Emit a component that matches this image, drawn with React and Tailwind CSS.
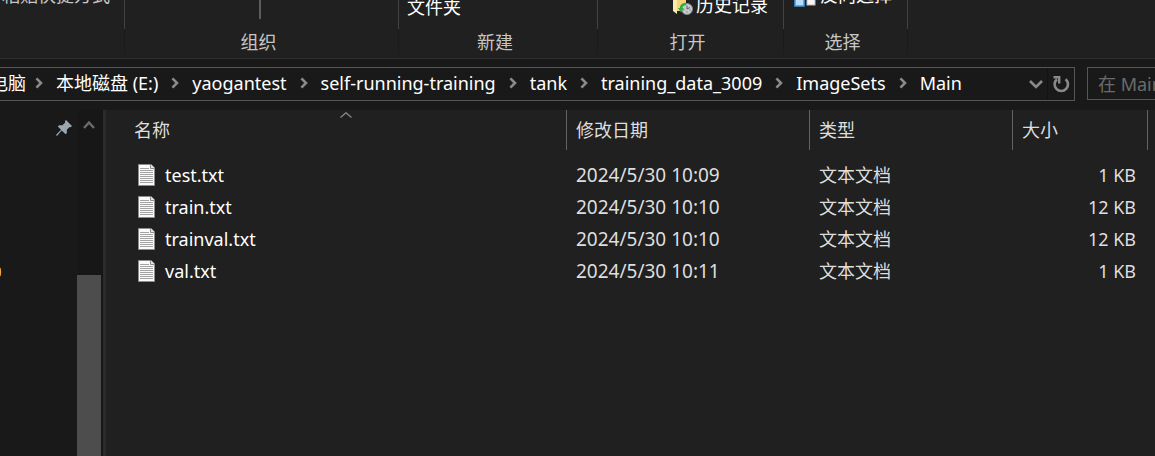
import React, { useState } from 'react';

const crumbs = [
  '本地磁盘 (E:)',
  'yaogantest',
  'self-running-training',
  'tank',
  'training_data_3009',
  'ImageSets',
  'Main',
];

const files = [
  { name: 'test.txt', date: '2024/5/30 10:09', type: '文本文档', size: '1 KB' },
  { name: 'train.txt', date: '2024/5/30 10:10', type: '文本文档', size: '12 KB' },
  { name: 'trainval.txt', date: '2024/5/30 10:10', type: '文本文档', size: '12 KB' },
  { name: 'val.txt', date: '2024/5/30 10:11', type: '文本文档', size: '1 KB' },
];

function ChevronRight() {
  return (
    <svg className="h-3 w-2 shrink-0" viewBox="0 0 8 12" fill="none" stroke="#8a8a8a" strokeWidth="2.6">
      <path d="M1.4 1.4 6 6 1.4 10.6" />
    </svg>
  );
}

function TextFileIcon() {
  return (
    <svg className="h-[22px] w-[17px] shrink-0" viewBox="0 0 17 22">
      <path d="M.5.5H13L16.5 4v17.5H.5z" fill="#fafafa" stroke="#8c8c8c" />
      <path d="M12.5 0v4.5H17" fill="#e8e8e8" stroke="#8c8c8c" />
      <path d="M2 4.5h9M2 6.5h13M2 8.5h13M2 10.5h13M2 12.5h13M2 14.5h13M2 16.5h13M2 18.5h13" stroke="#a3a3a3" />
    </svg>
  );
}

function HistoryIcon() {
  return (
    <svg className="h-6 w-6 shrink-0" viewBox="0 0 24 24">
      <path d="M3 0h13v18H6l-3-1z" fill="#f6d37a" />
      <path d="M3 0l4 3v18l-4-3z" fill="#ffe9a6" />
      <circle cx="17" cy="16" r="5.5" fill="#c9cdd0" stroke="#7d8487" />
      <path d="M17 12.5V16l3-1.5M13.5 17h1M17 19.5v-1M20.5 17h-1" stroke="#555b5e" fill="none" />
      <path d="M16 11c-3 0-5 2-5.2 5" stroke="#2fae3e" strokeWidth="2.4" fill="none" />
      <path d="M8 15h6l-3 4.5z" fill="#2fae3e" />
    </svg>
  );
}

function SelectIcon() {
  return (
    <svg className="h-6 w-6 shrink-0" viewBox="0 0 24 24">
      <rect x="1" y="13" width="9" height="10" fill="#b9dcfb" stroke="#3d9be9" strokeWidth="1.5" />
      <rect x="13" y="13" width="8" height="9" fill="#f5f5f5" stroke="#bdbdbd" />
    </svg>
  );
}

function RibbonGroup({ label, width, children }) {
  return (
    <section className={`flex shrink-0 flex-col ${width}`}>
      <div className="flex h-[29px] items-end overflow-hidden border-r border-[#424242]">{children}</div>
      <h2 className="h-[25px] border-r border-[#1b1b1b] pr-1.5 text-center leading-[26px] text-[#c6c6c6]">{label}</h2>
    </section>
  );
}

function HeadCell({ width, children }) {
  return (
    <th scope="col" className={`h-[49px] p-0 align-top text-left font-normal ${width}`}>
      <div className="relative h-10 border-r border-[#636363] leading-10">{children}</div>
    </th>
  );
}

export default function App() {
  const [query, setQuery] = useState('');

  return (
    <div className="flex h-screen flex-col overflow-hidden bg-[#191919] font-['Noto_Sans','Noto_Sans_CJK_SC',sans-serif] text-[18px] leading-6 text-white">
      {/* Ribbon */}
      <header className="flex h-[59px] shrink-0 overflow-hidden border-b border-[#2d2d2d] bg-[#202020] whitespace-nowrap">
        <RibbonGroup width="w-[125px]">
          <button className="pb-[22px] pl-0.5 text-[#c6c6c6]">粘贴快捷方式</button>
        </RibbonGroup>
        <RibbonGroup label="组织" width="w-[274px]">
          <div className="ml-[134px] h-[19px] w-0.5 self-start bg-[#5c5c5c]" />
        </RibbonGroup>
        <RibbonGroup label="新建" width="w-[199px]">
          <button className="pb-2.5 pl-2">文件夹</button>
        </RibbonGroup>
        <RibbonGroup label="打开" width="w-[186px]">
          <button className="flex items-end pb-3 pl-[72px]">
            <HistoryIcon />
            <span className="pl-0.5">历史记录</span>
          </button>
        </RibbonGroup>
        <RibbonGroup label="选择" width="w-[124px]">
          <button className="flex items-end pb-[22px] pl-2.5">
            <SelectIcon />
            <span className="pl-0.5">反向选择</span>
          </button>
        </RibbonGroup>
      </header>

      {/* Address bar */}
      <div className="flex shrink-0 items-start gap-3 pt-2 pb-[9px]">
        <div className="flex h-[34px] min-w-0 flex-1 items-center overflow-hidden border border-l-0 border-[#555555]">
          <nav className="flex min-w-0 flex-1 items-center gap-[13px] pb-0.5 whitespace-nowrap">
            <a href="#pc" className="-mr-1 -ml-7">此电脑</a>
            {crumbs.map((crumb) => (
              <React.Fragment key={crumb}>
                <ChevronRight />
                <a href={`#${crumb}`}>{crumb}</a>
              </React.Fragment>
            ))}
          </nav>
          <button aria-label="历史位置" className="flex h-8 w-6 items-center justify-center border-r border-[#131313]">
            <svg className="h-2.5 w-4" viewBox="0 0 16 10" fill="none" stroke="#8a8a8a" strokeWidth="2.6">
              <path d="M2 2l6 6 6-6" />
            </svg>
          </button>
          <button aria-label="刷新" className="flex h-8 w-[26px] items-center justify-center">
            <svg className="h-[18px] w-[18px]" viewBox="0 0 18 18" fill="none" stroke="#8a8a8a" strokeWidth="2.6">
              <path d="M13.6 4.2A6.7 6.7 0 1 1 5 4.2" />
              <path d="M1.5 2.2h5.7V8.5" strokeWidth="2.4" />
            </svg>
          </button>
        </div>
        <input
          type="text"
          aria-label="搜索"
          placeholder="在 Main 中搜索"
          value={query}
          onChange={(e) => setQuery(e.target.value)}
          className="h-[33px] w-[68px] border border-r-0 border-[#555555] bg-transparent pl-2.5 outline-none placeholder:text-[#6b6b6b]"
        />
      </div>

      <div className="flex min-h-0 flex-1">
        {/* Navigation pane */}
        <aside className="flex w-[77px] shrink-0 flex-col justify-between overflow-hidden">
          <svg className="mt-2.5 ml-14 h-4 w-4 shrink-0" viewBox="0 0 16 16" fill="#9aa7b0">
            <path d="M10 0l6 6-1.4 1.2-1-.3-2.8 2.9.1 3.2-1.3 1.3L5.7 10.500 1 16 0 15l5-5.2L1.8 6.5l1.3-1.3 3.3.1L9.3 2.4 8.9 1.2z" />
          </svg>
          <svg className="mb-[179px] h-2.5 w-0.5 shrink-0" viewBox="0 0 2 10">
            <path d="M0 .5C1.5 1 1.5 9 0 9.5z" fill="#f2a33c" />
          </svg>
        </aside>
        <div className="flex w-[26px] shrink-0 flex-col bg-[#171717] pr-0.5">
          <button aria-label="向上滚动" className="flex h-[165px] shrink-0 items-start justify-center pt-2.5">
            <svg className="h-2.5 w-3" viewBox="0 0 12 10" fill="none" stroke="#6b6b6b" strokeWidth="2.4">
              <path d="M1 8 6 2.5l5 5.5" />
            </svg>
          </button>
          <div className="flex-1 bg-[#4d4d4d]" />
        </div>
        <div className="w-[3px] shrink-0 bg-[#2b2b2b]" />

        {/* File list */}
        <main className="min-w-0 flex-1 bg-[#202020] pr-[7px]">
          <table className="w-full table-fixed border-collapse whitespace-nowrap text-[#dedede]">
            <thead>
              <tr>
                <HeadCell width="w-auto">
                  <span className="pl-7">名称</span>
                  <svg className="absolute top-0.5 left-1/2 ml-1 h-1.5 w-3" viewBox="0 0 12 6" fill="none" stroke="#8a8a8a" strokeWidth="1.2">
                    <path d="M.5 5.5 6 .7l5.5 4.8" />
                  </svg>
                </HeadCell>
                <HeadCell width="w-[243px]"><span className="pl-[9px]">修改日期</span></HeadCell>
                <HeadCell width="w-[203px]"><span className="pl-[9px]">类型</span></HeadCell>
                <HeadCell width="w-[135px]"><span className="pl-[9px]">大小</span></HeadCell>
              </tr>
            </thead>
            <tbody>
              {files.map((file) => (
                <tr key={file.name} className="h-8">
                  <td className="p-0 pl-8 text-white">
                    <div className="flex items-center gap-2.5">
                      <TextFileIcon />
                      {file.name}
                    </div>
                  </td>
                  <td className="p-0 pl-[9px] text-[19px]">{file.date}</td>
                  <td className="p-0 pl-[9px]">{file.type}</td>
                  <td className="p-0 pr-3 text-right">{file.size}</td>
                </tr>
              ))}
            </tbody>
          </table>
        </main>
      </div>
    </div>
  );
}
